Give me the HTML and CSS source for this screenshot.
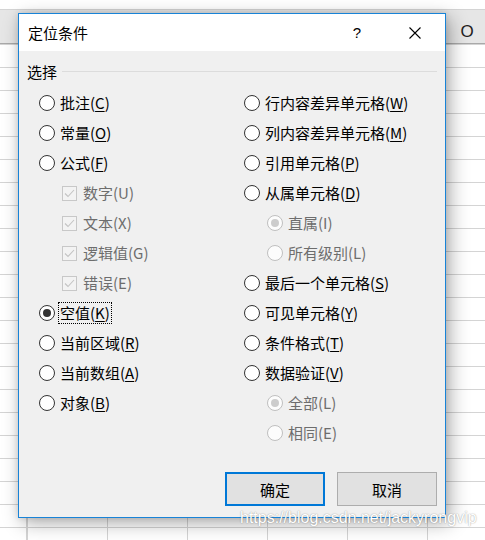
FILE: index.html
```html
<!DOCTYPE html>
<html lang="zh-CN">
<head>
<meta charset="utf-8">
<title>定位条件</title>
<link rel="stylesheet" href="styles.css">
</head>
<body>
<div class="sheet">
  <div class="topstrip"></div>
  <div class="colheader"><span class="colname">O</span></div>
  <div class="grid"></div>
</div>

<div class="dialog">
  <div class="titlebar">
    <span class="title">定位条件</span>
    <span class="help">?</span>
    <span class="close">
      <svg width="12" height="12" viewBox="0 0 12 12"><path d="M0.5 0.5L11.5 11.5M11.5 0.5L0.5 11.5" stroke="#000" stroke-width="1.1" fill="none"/></svg>
    </span>
  </div>
  <div class="body">
    <div class="group-head"><span class="group-label">选择</span><span class="rule"></span></div>
    <div class="cols">
      <div class="col col-left">
        <div class="row"><span class="radio"></span><span class="lbl">批注(<u>C</u>)</span></div>
        <div class="row"><span class="radio"></span><span class="lbl">常量(<u>O</u>)</span></div>
        <div class="row"><span class="radio"></span><span class="lbl">公式(<u>F</u>)</span></div>
        <div class="row sub"><span class="check"><svg width="13" height="13" viewBox="0 0 13 13"><path d="M2 6.5L5 9.5L11 3" stroke="#c3c3c3" stroke-width="1.1" fill="none"/></svg></span><span class="lbl dis">数字(U)</span></div>
        <div class="row sub"><span class="check"><svg width="13" height="13" viewBox="0 0 13 13"><path d="M2 6.5L5 9.5L11 3" stroke="#c3c3c3" stroke-width="1.1" fill="none"/></svg></span><span class="lbl dis">文本(X)</span></div>
        <div class="row sub"><span class="check"><svg width="13" height="13" viewBox="0 0 13 13"><path d="M2 6.5L5 9.5L11 3" stroke="#c3c3c3" stroke-width="1.1" fill="none"/></svg></span><span class="lbl dis">逻辑值(G)</span></div>
        <div class="row sub"><span class="check"><svg width="13" height="13" viewBox="0 0 13 13"><path d="M2 6.5L5 9.5L11 3" stroke="#c3c3c3" stroke-width="1.1" fill="none"/></svg></span><span class="lbl dis">错误(E)</span></div>
        <div class="row"><span class="radio on"></span><span class="lbl focus">空值(<u>K</u>)</span></div>
        <div class="row"><span class="radio"></span><span class="lbl">当前区域(<u>R</u>)</span></div>
        <div class="row"><span class="radio"></span><span class="lbl">当前数组(<u>A</u>)</span></div>
        <div class="row"><span class="radio"></span><span class="lbl">对象(<u>B</u>)</span></div>
      </div>
      <div class="col col-right">
        <div class="row"><span class="radio"></span><span class="lbl">行内容差异单元格(<u>W</u>)</span></div>
        <div class="row"><span class="radio"></span><span class="lbl">列内容差异单元格(<u>M</u>)</span></div>
        <div class="row"><span class="radio"></span><span class="lbl">引用单元格(<u>P</u>)</span></div>
        <div class="row"><span class="radio"></span><span class="lbl">从属单元格(<u>D</u>)</span></div>
        <div class="row sub"><span class="radio dis on"></span><span class="lbl dis sublbl">直属(I)</span></div>
        <div class="row sub"><span class="radio dis"></span><span class="lbl dis sublbl">所有级别(L)</span></div>
        <div class="row"><span class="radio"></span><span class="lbl">最后一个单元格(<u>S</u>)</span></div>
        <div class="row"><span class="radio"></span><span class="lbl">可见单元格(<u>Y</u>)</span></div>
        <div class="row"><span class="radio"></span><span class="lbl">条件格式(<u>T</u>)</span></div>
        <div class="row"><span class="radio"></span><span class="lbl">数据验证(<u>V</u>)</span></div>
        <div class="row sub"><span class="radio dis on"></span><span class="lbl dis sublbl">全部(L)</span></div>
        <div class="row sub"><span class="radio dis"></span><span class="lbl dis sublbl">相同(E)</span></div>
      </div>
    </div>
    <div class="buttons">
      <button class="btn btn-default">确定</button>
      <button class="btn">取消</button>
    </div>
  </div>
</div>

<div class="watermark">https://blog.csdn.net/jackyrongvip</div>
</body>
</html>
```

FILE: styles.css
```css
html, body {
  margin: 0;
  padding: 0;
}
body {
  width: 485px;
  height: 540px;
  overflow: hidden;
  position: relative;
  background: #fff;
  font-family: "Noto Sans CJK SC", "Noto Sans", sans-serif;
}

/* spreadsheet background */
.sheet {
  width: 485px;
  height: 540px;
  display: flex;
  flex-direction: column;
  overflow: hidden;
}
.topstrip {
  height: 9px;
  background: #fff;
}
.colheader {
  height: 33px;
  border-top: 1px solid #d4d4d4;
  border-bottom: 1px solid #a9a9a9;
  background: #e6e6e6;
  display: flex;
  align-items: flex-end;
  padding-left: 427px;
}
.colname {
  flex: 0 0 80px;
  text-align: center;
  font-family: "Liberation Sans", Arial, sans-serif;
  font-size: 17px;
  line-height: 20px;
  color: #222;
  padding-bottom: 1px;
}
.grid {
  flex: 1;
  background-image:
    linear-gradient(to bottom, transparent 22px, #d4d4d4 22px, #d4d4d4 23px),
    linear-gradient(to right, transparent 79px, #d4d4d4 79px, #d4d4d4 80px),
    linear-gradient(to right, transparent 26px, #d4d4d4 26px, #d4d4d4 27px, transparent 27px);
  background-size: 100% 23px, 80px 100%, 100% 100%;
  background-position: 0 1px, 28px 0, 0 0;
  background-repeat: repeat, repeat-x, no-repeat;
}

/* dialog window */
.dialog {
  position: absolute;
  left: 18px;
  top: 13px;
  width: 426px;
  height: 503px;
  border: 1px solid #1883d7;
  background: #f0f0f0;
  box-shadow: 4px 5px 18px rgba(0, 0, 0, 0.33), 0 0 6px rgba(0, 0, 0, 0.12);
  display: flex;
  flex-direction: column;
}
.titlebar {
  height: 37px;
  flex: 0 0 37px;
  background: #fff;
  display: flex;
  align-items: center;
  padding-left: 9px;
}
.title {
  flex: 1;
  font-size: 15px;
  line-height: 20px;
  color: #000;
  padding-top: 1px;
}
.help {
  width: 30px;
  text-align: center;
  font-family: "Liberation Sans", Arial, sans-serif;
  font-size: 15px;
  line-height: 20px;
  color: #000;
  padding-top: 1px;
}
.close {
  width: 46px;
  height: 37px;
  margin-left: 20px;
  margin-right: 7px;
  display: flex;
  align-items: center;
  justify-content: center;
  padding-top: 1px;
  box-sizing: border-box;
}

.body {
  flex: 1;
  display: flex;
  flex-direction: column;
  padding: 11px 8px 11px 8px;
}
.group-head {
  display: flex;
  align-items: flex-start;
  height: 20px;
}
.group-label {
  font-size: 15px;
  line-height: 20px;
  color: #000;
}
.rule {
  flex: 1;
  height: 1px;
  background: #dcdcdc;
  margin-top: 9px;
  margin-left: 5px;
}

.cols {
  display: flex;
  margin-top: 6px;
  padding-left: 12px;
}
.col {
  display: flex;
  flex-direction: column;
}
.col-left {
  width: 205px;
}
.col-right {
  flex: 1;
}
.row {
  height: 30px;
  display: flex;
  align-items: center;
}
.row.sub {
  padding-left: 23px;
}

.radio {
  width: 16px;
  height: 16px;
  box-sizing: border-box;
  border: 1px solid #333;
  border-radius: 50%;
  background: #fff;
  flex: 0 0 16px;
  display: flex;
  align-items: center;
  justify-content: center;
}
.radio.on::after {
  content: "";
  width: 8px;
  height: 8px;
  border-radius: 50%;
  background: #333;
}
.radio.dis {
  border-color: #bfbfbf;
  background: #fcfcfc;
}
.radio.dis.on::after {
  background: #cccccc;
}

.check {
  width: 15px;
  height: 15px;
  flex: 0 0 15px;
  box-sizing: border-box;
  border: 1px solid #c8c8c8;
  background: #f3f3f3;
  display: flex;
  align-items: center;
  justify-content: center;
}
.check svg {
  display: block;
}

.lbl {
  margin-left: 5px;
  font-size: 15px;
  line-height: 20px;
  color: #000;
  white-space: nowrap;
}
.lbl u {
  text-decoration: underline;
  text-underline-offset: 2px;
  text-decoration-thickness: 1px;
}
.lbl.dis {
  color: #6d6d6d;
}
.check + .lbl {
  margin-left: 6px;
}
.lbl.focus {
  margin-left: 3px;
  padding: 0 1px;
  border: 1px dotted #000;
}

.buttons {
  margin-top: auto;
  display: flex;
  justify-content: flex-end;
  gap: 12px;
}
.btn {
  width: 100px;
  height: 34px;
  box-sizing: border-box;
  background: #e1e1e1;
  border: 1px solid #adadad;
  font-family: "Noto Sans CJK SC", "Noto Sans", sans-serif;
  font-size: 15px;
  color: #000;
  padding: 0;
  margin: 0;
}
.btn-default {
  border: 2px solid #0078d7;
}

.watermark {
  position: absolute;
  left: 240px;
  top: 508px;
  font-family: "Liberation Sans", Arial, sans-serif;
  font-size: 16px;
  line-height: 20px;
  color: #fff;
  white-space: nowrap;
  text-shadow: 0 0 1px rgba(0,0,0,0.3), 0 0 2px rgba(0,0,0,0.18);
}
```
